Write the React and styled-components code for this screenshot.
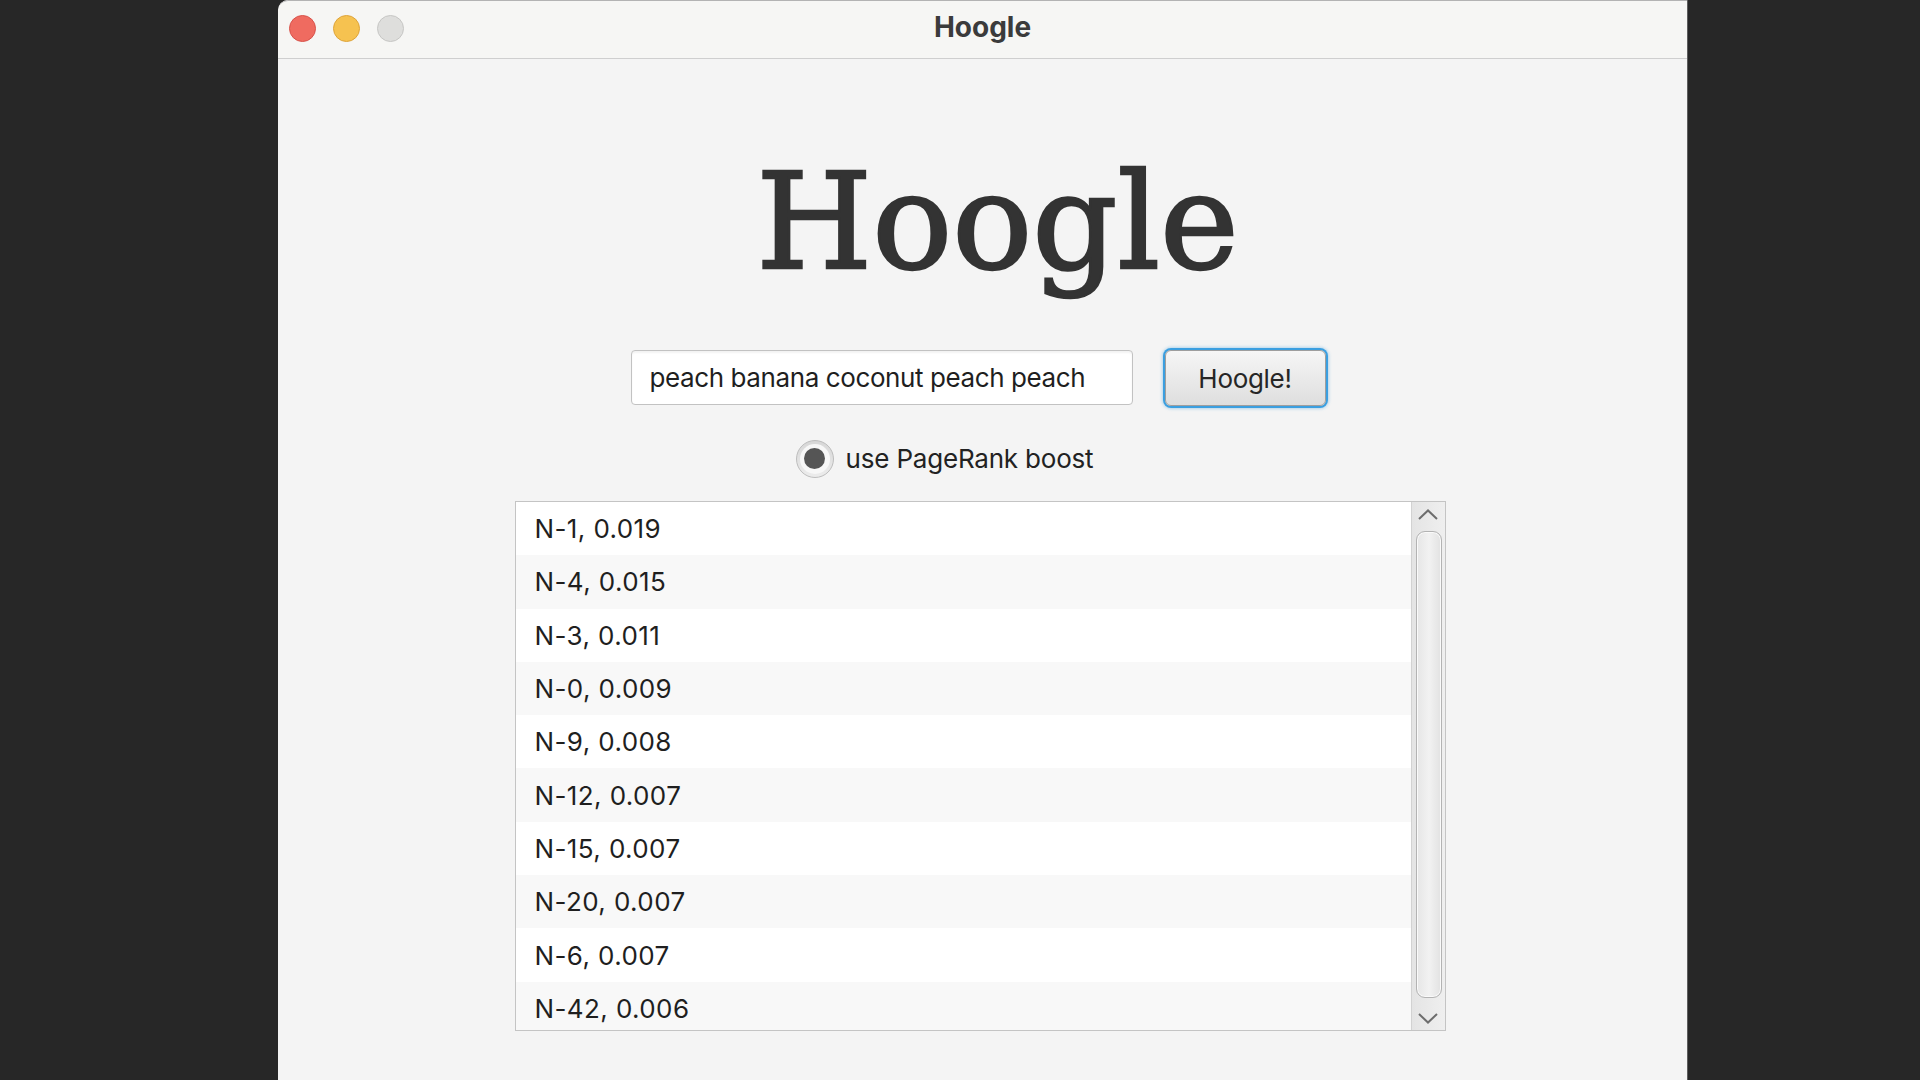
import styled, { createGlobalStyle } from 'styled-components'

const GlobalStyle = createGlobalStyle`
    html, body {
        margin: 0;
        padding: 0;
        height: 100%;
        overflow: hidden;
        background: #272727;
    }
    #root {
        height: 100%;
    }
`;

const results = [
    'N-1, 0.019',
    'N-4, 0.015',
    'N-3, 0.011',
    'N-0, 0.009',
    'N-9, 0.008',
    'N-12, 0.007',
    'N-15, 0.007',
    'N-20, 0.007',
    'N-6, 0.007',
    'N-42, 0.006',
];

// 바깥 배경 (어두운 데스크톱)
const Desktop = styled.div`
    display: flex;
    height: 100%;
    padding-left: 278px;
    background: #272727;
    font-family: Inter, "Noto Sans", sans-serif;
`;

const AppWindow = styled.div`
    display: flex;
    flex-direction: column;
    width: 1410px;
    height: 100%;
    background: #f4f4f4;
    border-top-left-radius: 10px;
    border-right: 1px solid #5e5e5e;
    box-sizing: border-box;
    overflow: hidden;
`;

// 타이틀바
const TitleBar = styled.div`
    display: grid;
    grid-template-columns: 1fr auto 1fr;
    align-items: center;
    height: 59px;
    flex-shrink: 0;
    padding: 0 11px;
    background: #f6f6f4;
    border-top: 1px solid #b3b3b3;
    border-bottom: 1px solid #cfcfcf;
    box-sizing: border-box;
    border-top-left-radius: 10px;
`;

const Lights = styled.div`
    display: flex;
    gap: 17px;
    margin-top: -3px;
`;

const Light = styled.span`
    width: 27px;
    height: 27px;
    border-radius: 50%;
    box-sizing: border-box;
    background: ${(props) => props.color};
    border: 1px solid ${(props) => props.edge};
`;

const Title = styled.div`
    font-family: Inter, "Liberation Sans", sans-serif;
    font-weight: 700;
    font-size: 28px;
    color: #3b3b3b;
    margin-top: -5px;
`;

const Content = styled.div`
    display: flex;
    flex-direction: column;
    align-items: center;
    flex: 1;
`;

// 로고
const Logo = styled.h1`
    margin: 97px 0 0 30px;
    font-family: "DejaVu Serif", serif;
    font-weight: 400;
    font-size: 133px;
    line-height: 1;
    color: #333333;
    letter-spacing: 0px;
    -webkit-text-stroke: 2.5px #333333;
`;

const SearchRow = styled.div`
    display: flex;
    gap: 32px;
    margin: 61px 9px 0 0;
`;

const SearchInput = styled.input`
    width: 502px;
    height: 55px;
    box-sizing: border-box;
    padding: 0 18px;
    border: 1px solid #c2c2c2;
    border-radius: 4px;
    background: #fff;
    box-shadow: inset 0 2px 2px rgba(0, 0, 0, 0.05);
    font-family: Inter, "Noto Sans", sans-serif;
    font-size: 26px;
    letter-spacing: -0.4px;
    color: #1f1f1f;
    outline: none;
`;

const SearchButton = styled.button`
    width: 161px;
    height: 56px;
    box-sizing: border-box;
    border: 1px solid #9e9e9e;
    border-radius: 6px;
    box-shadow: 0 0 0 2px #3b9fe0, 0 0 3px 3px rgba(59, 159, 224, 0.35);
    background: linear-gradient(#f6f6f6, #dedede);
    font-family: Inter, "Noto Sans", sans-serif;
    font-size: 26px;
    letter-spacing: -0.3px;
    color: #262626;
`;

// 라디오 버튼
const RadioRow = styled.label`
    display: flex;
    align-items: center;
    gap: 12px;
    height: 39px;
    margin: 33px 76px 0 0;
    font-size: 26px;
    letter-spacing: -0.2px;
    color: #222;
`;

const RadioRing = styled.span`
    display: flex;
    align-items: center;
    justify-content: center;
    width: 38px;
    height: 38px;
    border-radius: 50%;
    box-sizing: border-box;
    border: 1px solid #bdbdbd;
    background: linear-gradient(#d7d7d7, #ececec);
`;

const RadioInner = styled.span`
    display: flex;
    align-items: center;
    justify-content: center;
    width: 30px;
    height: 30px;
    border-radius: 50%;
    background: #f7f7f7;
`;

const RadioDot = styled.span`
    width: 21px;
    height: 21px;
    border-radius: 50%;
    background: #555;
`;

// 결과 리스트
const ResultList = styled.div`
    display: flex;
    width: 931px;
    height: 530px;
    box-sizing: border-box;
    margin: 23px 5px 0 0;
    border: 1px solid #c4c4c4;
    background: #fff;
`;

const Rows = styled.div`
    flex: 1;
    overflow: hidden;
`;

const ResultRow = styled.div`
    display: flex;
    align-items: center;
    height: 53.3px;
    padding-left: 19px;
    background: ${(props) => (props.$odd ? '#f8f8f8' : '#ffffff')};
    font-size: 26px;
    letter-spacing: 0.4px;
    color: #1f1f1f;
`;

const ScrollBar = styled.div`
    display: flex;
    flex-direction: column;
    align-items: center;
    width: 33px;
    border-left: 1px solid #d2d2d2;
    background: linear-gradient(to right, #e4e4e4, #efefef);
`;

const ScrollArrow = styled.div`
    display: flex;
    align-items: center;
    justify-content: center;
    height: 24px;
    width: 100%;
    flex-shrink: 0;
`;

const Thumb = styled.div`
    flex: 1;
    width: 26px;
    margin: 5px 0 8px 1px;
    box-sizing: border-box;
    border: 1px solid #b3b3b3;
    border-radius: 9px;
    background: linear-gradient(to right, #e6e6e6, #f2f2f2 50%, #e2e2e2);
    box-shadow: inset 0 0 0 1px #fafafa;
`;

function Chevron({ up }) {
    return (
        <svg width="20" height="11" viewBox="0 0 20 11">
            <path
                d={up ? 'M1 10 L10 1.5 L19 10' : 'M1 1 L10 9.5 L19 1'}
                fill="none"
                stroke="#6d6d6d"
                strokeWidth="2"
            />
        </svg>
    );
}

export default function App() {
    return (
        <Desktop>
            <GlobalStyle />
            <AppWindow>
                <TitleBar>
                    <Lights>
                        <Light color="#ef6b60" edge="#d8524a" />
                        <Light color="#f6c250" edge="#dea43a" />
                        <Light color="#dededc" edge="#c6c6c4" />
                    </Lights>
                    <Title>Hoogle</Title>
                </TitleBar>
                <Content>
                    <Logo>Hoogle</Logo>
                    <SearchRow>
                        <SearchInput defaultValue="peach banana coconut peach peach" />
                        <SearchButton>Hoogle!</SearchButton>
                    </SearchRow>
                    <RadioRow>
                        <RadioRing>
                            <RadioInner>
                                <RadioDot />
                            </RadioInner>
                        </RadioRing>
                        use PageRank boost
                    </RadioRow>
                    <ResultList>
                        <Rows>
                            {results.map((r, i) => (
                                <ResultRow key={r} $odd={i % 2 === 1}>{r}</ResultRow>
                            ))}
                        </Rows>
                        <ScrollBar>
                            <ScrollArrow><Chevron up /></ScrollArrow>
                            <Thumb />
                            <ScrollArrow><Chevron /></ScrollArrow>
                        </ScrollBar>
                    </ResultList>
                </Content>
            </AppWindow>
        </Desktop>
    )
}
